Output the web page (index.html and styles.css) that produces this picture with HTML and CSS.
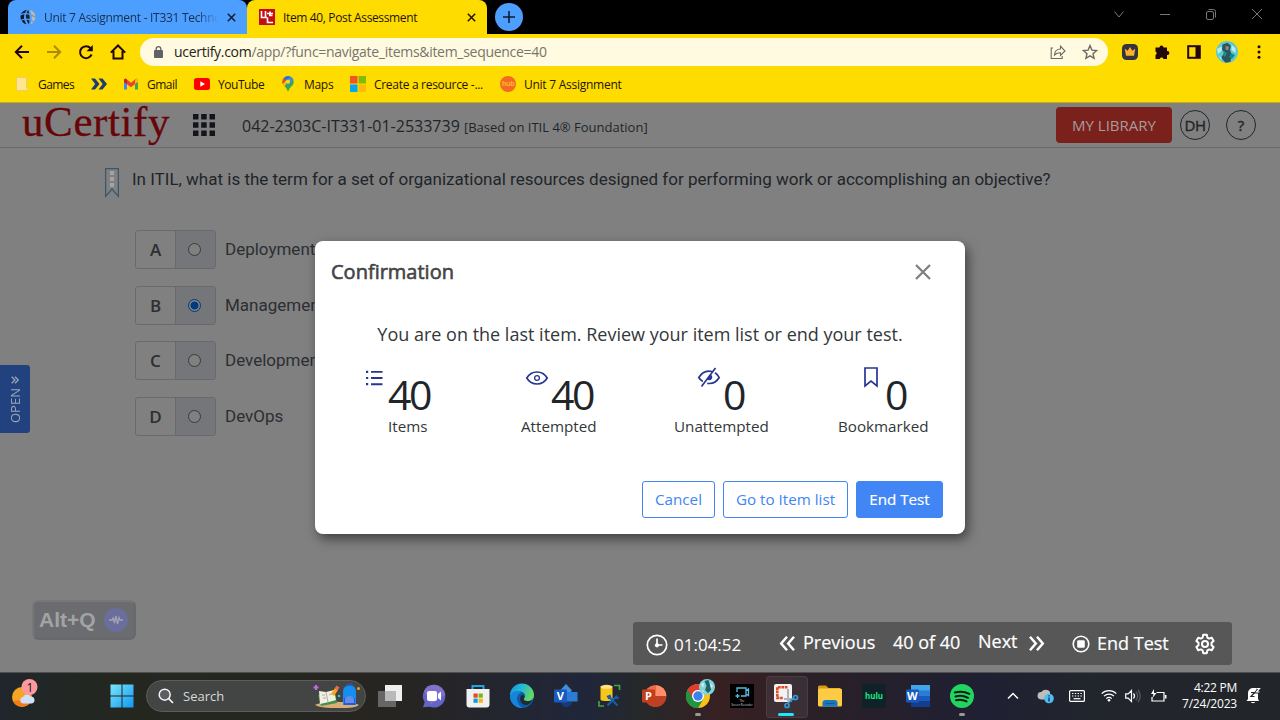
FILE: index.html
```html
<!DOCTYPE html>
<html lang="en">
<head>
<meta charset="utf-8">
<title>Item 40, Post Assessment</title>
<link rel="stylesheet" href="styles.css">
</head>
<body>
<div class="screen">
  <div class="tabstrip">
    <div class="tab tab-idle">
      <svg width="16" height="16" viewBox="0 0 16 16"><path d="M7 .8C2 1.500-.3 6 .8 10c1 3.200 3.200 4.700 5.700 5.200-3.400-5-3.400-9.500.5-14.400z" fill="#101820"/><path d="M8.300 1c-3.300 4-3.300 9.500.7 14.200 1-5 .8-9.700-.7-14.200z" fill="#17222e"/><path d="M9.700 1c4 1 6.100 4 5.600 8-.3 3-2 5.300-4.600 6.200 1.700-5 1.500-9.700-1-14.200z" fill="#c9b89a"/><path d="M.5 6c4.500-2.500 10-1 15 2.500M1 11.500c3-2.500 9-1.500 13 1.500" stroke="#4c9eff" stroke-width="1.200" fill="none"/></svg>
      <span class="tab-title fade">Unit 7 Assignment - IT331 Techno</span>
      <svg class="x" width="9" height="9" viewBox="0 0 9 9"><path d="M.8.8l7.400 7.400M8.200.8L.8 8.200" stroke="#101c2c" stroke-width="1.500"/></svg>
    </div>
    <div class="tab tab-active">
      <svg width="16" height="16" viewBox="0 0 16 16"><rect width="16" height="16" fill="#c40d12"/><path d="M2.500 2v6.500H8M6.500 2v6.500M4.500 11.500M13.500 6.500H10M14 13.500H8.500V8.500M11 2.500v4M8 4.500h6" stroke="#fff" stroke-width="1.600" fill="none"/></svg>
      <span class="tab-title">Item 40, Post Assessment</span>
      <svg class="x" width="9" height="9" viewBox="0 0 9 9"><path d="M.8.8l7.400 7.400M8.200.8L.8 8.200" stroke="#201400" stroke-width="1.500"/></svg>
    </div>
    <div class="newtab"><svg width="12" height="12" viewBox="0 0 12 12"><path d="M6 0v12M0 6h12" stroke="#0f1d30" stroke-width="1.600"/></svg></div>
    <div class="winctl">
      <svg width="12" height="12" viewBox="0 0 12 12"><path d="M1.500 3.500L6 9l4.500-5.500"/></svg>
      <svg width="12" height="12" viewBox="0 0 12 12"><path d="M1 6.500h10"/></svg>
      <svg width="12" height="12" viewBox="0 0 12 12"><rect x="1.500" y="3.500" width="7" height="8" rx="1.500"/><path d="M3.500 1.500h5a2 2 0 0 1 2 2v6"/></svg>
      <svg width="12" height="12" viewBox="0 0 12 12"><path d="M1 1l10 10M11 1L1 11"/></svg>
    </div>
  </div>

  <div class="toolbar">
    <svg class="nav" viewBox="0 0 16 16"><path d="M15 8H2M8 1.800L1.800 8 8 14.200"/></svg>
    <svg class="nav dim" viewBox="0 0 16 16"><path d="M1 8h13M8 1.800L14.200 8 8 14.200"/></svg>
    <svg class="nav" viewBox="0 0 16 16"><path d="M13.600 10.500A6 6 0 1 1 12.600 4.200"/><path d="M14.800 1v6.300H8.500z" fill="#22060c" stroke="none"/></svg>
    <svg class="nav" viewBox="0 0 16 16"><path d="M.8 8.600L8 1.500l7.200 7.100M3.500 7v7.500h9V7"/></svg>
    <div class="omnibox">
      <svg class="lock" width="9" height="12" viewBox="0 0 9 12"><rect y="4" width="9" height="8" rx="1" fill="#5f6268"/><path d="M2.200 4.500V3a2.300 2.300 0 0 1 4.600 0v1.500" stroke="#5f6268" stroke-width="1.300" fill="none"/></svg>
      <span class="url"><b>ucertify.com</b>/app/?func=navigate_items&amp;item_sequence=40</span>
      <svg class="omni-icon" width="16" height="16" viewBox="0 0 16 16"><path d="M3 4H1.200v10.500h11V12M4.500 11c.3-4 2.500-6 6-6V2.200L15 7l-4.500 4.500V8.700C8 8.700 6 9.500 4.500 11z"/></svg>
      <svg class="omni-icon" width="16" height="16" viewBox="0 0 16 16"><path stroke-width="1.400" d="M8 1.600l1.900 4.500 4.700.4-3.600 3.200 1.100 4.700L8 11.900l-4.100 2.500L5 9.700 1.400 6.500l4.700-.4z"/></svg>
    </div>
    <div class="ext">
      <svg width="16" height="16" viewBox="0 0 16 16"><rect width="16" height="16" rx="4.500" fill="#343440"/><path d="M2.800 4.800l2.900 2L8 3l2.300 3.800 2.900-2-1.200 7H4z" fill="#fdb02c"/></svg>
      <svg width="16" height="16" viewBox="0 0 16 16"><path d="M5.500 3.500a2 2 0 1 1 4 0H13v3.600h.5a1.900 1.900 0 0 1 0 3.800H13v4H9.500a1.900 1.900 0 0 0-3.700 0H1.500v-4a1.900 1.900 0 0 0 0-3.500V3.500z" fill="#22060c"/></svg>
      <svg width="14" height="14" viewBox="0 0 14 14"><rect x="1.200" y="1.200" width="11.600" height="11.600" fill="none" stroke="#22060c" stroke-width="2"/><rect x="8.500" y="1" width="4.500" height="12" fill="#22060c"/></svg>
      <svg width="22" height="22" viewBox="0 0 22 22"><circle cx="11" cy="11" r="11" fill="#5fc9d2"/><path d="M6.500 3.500l5-1.700 3.500 3-1 4 1.500 5-1 7-5 1-4.500-5 3.500-5-2.500-3z" fill="#2c555c"/><path d="M1 8l4.500-2.500.5 4L2 13zM15.500 4l4 3v5l-4-3zM3 15l3 2-1 2z" fill="#b5f0f3"/><path d="M9.500 5l3.500.7-.8 3.500-2.500-.5z" fill="#a18480"/><path d="M15 12l4 2-3 4-3-2z" fill="#138a8c"/><path d="M8 10l3 2-2 4-2-2z" fill="#178f91"/></svg>
      <svg width="4" height="16" viewBox="0 0 4 16" fill="#22060c"><circle cx="2" cy="2.800" r="1.500"/><circle cx="2" cy="8" r="1.500"/><circle cx="2" cy="13.200" r="1.500"/></svg>
    </div>
  </div>

  <div class="bookmarks">
    <svg width="16" height="16" viewBox="0 0 16 16"><path d="M2.500 1.500h10v10.500h1.500v2.500H2.500z" fill="#ffe68e" stroke="#edcd5e"/></svg>
    <span class="games">Games</span>
    <svg width="16" height="16" viewBox="0 0 16 16"><path d="M0 2.500h4L8.500 8 4 13.500H0L4.200 8zM7.500 2.500h4L16 8l-4.500 5.500h-4L11.700 8z" fill="#1d3d70"/></svg>
    <span></span>
    <svg width="16" height="16" viewBox="0 0 16 16"><path d="M1 4v9.500h3V7z" fill="#4285f4"/><path d="M15 4v9.500h-3V7z" fill="#34a853"/><path d="M1 3.500L2.800 2.500 8 6.700l5.200-4.200L15 3.500V6l-7 5.300L1 6z" fill="#ea4335"/><path d="M12 4v4l3-2V3.500l-1.500-1z" fill="#fbbc04"/><path d="M1 3.500V6l3 2V4.500L2.800 2.500z" fill="#c5221f"/></svg>
    <span class="gmail">Gmail</span>
    <svg width="16" height="16" viewBox="0 0 16 16"><rect y="2" width="16" height="12" rx="2.500" fill="#f00"/><path d="M6.300 5.300v5.400L11 8z" fill="#fff"/></svg>
    <span class="youtube">YouTube</span>
    <svg width="16" height="16" viewBox="0 0 16 16"><path d="M8 0a5.700 5.700 0 0 1 5.700 5.700c0 4.200-4.200 5-5.700 10.300C7 11 2.300 9.500 2.300 5.700z" fill="#34a853"/><path d="M8 0a5.700 5.700 0 0 1 5.300 3.600L8 9.500 5.800 7.200l4.600-6.600z" fill="#4285f4"/><path d="M3.700 2A5.700 5.700 0 0 1 8 0l2 .4-4 5z" fill="#1a73e8"/><path d="M3.700 2l2.700 2.300-3.600 3.800C2 6 2.300 3.500 3.700 2z" fill="#ea4335"/><path d="M2.800 8.100l3.100-3.600.5 3.200-2.100 3z" fill="#fbbc04"/><circle cx="8" cy="5.700" r="2.100" fill="#ffdc00"/></svg>
    <span class="maps">Maps</span>
    <svg width="16" height="16" viewBox="0 0 16 16"><path d="M0 0h7.500v7.500H0z" fill="#f35325"/><path d="M8.500 0H16v7.500H8.500z" fill="#81bc06"/><path d="M0 8.500h7.500V16H0z" fill="#05a6f0"/><path d="M8.500 8.500H16V16H8.500z" fill="#ffba08"/></svg>
    <span class="create">Create a resource -...</span>
    <div class="hub">hub</div>
    <span class="unit">Unit 7 Assignment</span>
  </div>

  <main class="app">
    <header class="site">
      <div class="logo">uCertify</div>
      <svg class="apps" width="22" height="22" viewBox="0 0 22 22" fill="#13151b"><path d="M0 0h5.500v5.500H0zM8.200 0h5.500v5.500H8.200zM16.500 0H22v5.500h-5.500zM0 8.200h5.500v5.500H0zM8.200 8.200h5.500v5.500H8.200zM16.500 8.200H22v5.500h-5.500zM0 16.500h5.500V22H0zM8.200 16.500h5.500V22H8.200zM16.500 16.500H22V22h-5.500z"/></svg>
      <div class="course">042-2303C-IT331-01-2533739 <small>[Based on ITIL 4® Foundation]</small></div>
      <div class="library">MY LIBRARY</div>
      <div class="round dh">DH</div>
      <div class="round help">?</div>
    </header>
    <div class="question">
      <svg width="14" height="30" viewBox="0 0 14 30"><path d="M.6 28.300V.6h12.800v27.700L7 21z" fill="none" stroke="#35566c" stroke-width="1.200"/><path d="M5 3h4v4H5zM5 9h4v4H5zM5 15h4v4H5z" fill="#a3a3a3"/></svg>
      <p>In ITIL, what is the term for a set of organizational resources designed for performing work or accomplishing an objective?</p>
    </div>
    <div class="options">
      <div class="option"><div class="key"><b>A</b><i><span class="radio"></span></i></div><span>Deployment</span></div>
      <div class="option"><div class="key"><b>B</b><i><span class="radio on"></span></i></div><span>Management</span></div>
      <div class="option"><div class="key"><b>C</b><i><span class="radio"></span></i></div><span>Development</span></div>
      <div class="option"><div class="key"><b>D</b><i><span class="radio"></span></i></div><span>DevOps</span></div>
    </div>
    <div class="open-tab"><span>OPEN</span><svg width="8" height="8" viewBox="0 0 8 8"><path d="M.7.7L4 4 .7 7.300M4 .7L7.300 4 4 7.300" fill="none" stroke="#9aa5b8" stroke-width="1.300"/></svg></div>
    <div class="hotkey"><span>Alt+Q</span><svg width="24" height="24" viewBox="0 0 24 24"><circle cx="12" cy="12" r="12" fill="#6b6d9d"/><path d="M5 12h3l1.200-2 1.300 5 1.500-7 1.500 8 1.500-6.500 1 2.500h3" fill="none" stroke="#a4a5b4" stroke-width="1.300"/></svg></div>
    <div class="testbar">
      <svg class="clock" width="22" height="22" viewBox="0 0 22 22"><circle cx="11" cy="11" r="9.700" fill="none" stroke="#fff" stroke-width="1.700"/><path d="M11 4.500V11h5.500" fill="none" stroke="#fff" stroke-width="1.700"/><circle cx="11" cy="11.300" r="2.100" fill="#fff"/></svg>
      <span class="time">01:04:52</span>
      <svg class="chev" width="15" height="15" viewBox="0 0 15 15"><path d="M7 .8L1.200 7.500 7 14.200M14 .8L8.200 7.500l5.800 6.700"/></svg>
      <span class="prev">Previous</span>
      <span class="count">40 of 40</span>
      <span class="next">Next</span>
      <svg class="chev" width="15" height="15" viewBox="0 0 15 15"><path d="M1 .8l5.800 6.700L1 14.200M8 .8l5.800 6.700L8 14.200"/></svg>
      <svg class="stop" width="18" height="18" viewBox="0 0 18 18"><circle cx="9" cy="9" r="7.800" fill="none" stroke="#fff" stroke-width="1.600"/><rect x="5.200" y="5.200" width="7.600" height="7.600" rx="1.200" fill="#fff"/></svg>
      <span class="end">End Test</span>
      <svg class="gear" width="22" height="22" viewBox="0 0 24 24"><path d="M10 2h4l.6 3 1.900 1.100 2.900-1 2 3.500-2.300 2v2.800l2.300 2-2 3.500-2.900-1-1.900 1.100-.6 3h-4l-.6-3-1.900-1.100-2.900 1-2-3.500 2.300-2v-2.800l-2.300-2 2-3.500 2.900 1L9.400 5z" fill="none" stroke="#fff" stroke-width="2.200" stroke-linejoin="round"/><circle cx="12" cy="12" r="3.300" fill="none" stroke="#fff" stroke-width="2.200"/></svg>
    </div>

    <section class="modal">
      <div class="modal-head"><h2>Confirmation</h2><svg width="16" height="16" viewBox="0 0 16 16"><path d="M1 1l14 14M15 1L1 15" stroke="#808080" stroke-width="2.300"/></svg></div>
      <p class="message">You are on the last item. Review your item list or end your test.</p>
      <div class="stats">
        <div class="stat items"><div class="figure"><svg width="18" height="16" viewBox="0 0 18 16" fill="#283593"><path d="M1 .7h2.200v2.200H1zM1 6.900h2.200v2.200H1zM1 13.100h2.200v2.200H1zM6 .9h11.500v1.900H6zM6 7.100h11.500V9H6zM6 13.300h11.500v1.900H6z"/></svg><strong>40</strong></div><span>Items</span></div>
        <div class="stat attempted"><div class="figure"><svg width="22" height="14" viewBox="0 0 22 14"><path d="M.8 7C5.500-1 16.500-1 21.200 7 16.500 15 5.500 15 .8 7z" fill="none" stroke="#283593" stroke-width="1.700"/><circle cx="11" cy="7" r="2.400" fill="none" stroke="#283593" stroke-width="1.300"/></svg><strong>40</strong></div><span>Attempted</span></div>
        <div class="stat unattempted"><div class="figure"><svg width="22" height="20" viewBox="0 0 22 20"><path d="M4.800 14.500C3 13.500 1.700 12.100.8 10.500 4.500 4.300 10 3.500 14 4.500M17 5.700c1.700 1.100 3.200 2.700 4.200 4.800-2.800 4.800-7.500 6.500-12 5.800" fill="none" stroke="#283593" stroke-width="1.700"/><path d="M3.500 19.500L17.500 1" stroke="#283593" stroke-width="1.700"/><path d="M12.500 7.500a3 3 0 1 1-3.500 4.700z" fill="#283593"/></svg><strong>0</strong></div><span>Unattempted</span></div>
        <div class="stat bookmarked"><div class="figure"><svg width="14" height="20" viewBox="0 0 14 20"><path d="M1 19V1h12v18l-6-4.800z" fill="none" stroke="#283593" stroke-width="1.700"/></svg><strong>0</strong></div><span>Bookmarked</span></div>
      </div>
      <div class="actions"><button class="btn cancel">Cancel</button><button class="btn list">Go to Item list</button><button class="btn primary">End Test</button></div>
    </section>
  </main>

  <footer class="taskbar">
    <svg class="weather" width="26" height="30" viewBox="0 0 26 30"><circle cx="10" cy="18" r="10" fill="#f5a423"/><path d="M1 22a10 10 0 0 0 16 3l3-5z" fill="#f27a1b"/><path d="M11 24.500a3.300 3.300 0 0 1 0-6.500 4.300 4.300 0 0 1 7.500-.5 3.600 3.600 0 0 1 1.500 7z" fill="#cfe0fa"/><circle cx="17.500" cy="8" r="8" fill="#ff99a0"/><text x="14.500" y="12.500" font-size="12" font-family="Open Sans, sans-serif" fill="#111">1</text></svg>
    <svg class="start" width="24" height="24" viewBox="0 0 24 24"><defs><linearGradient id="win" gradientUnits="userSpaceOnUse" x1="0" y1="0" x2="24" y2="24"><stop stop-color="#7ce8fb"/><stop offset="1" stop-color="#0f95f2"/></linearGradient></defs><path d="M.5.5h11v11H.5zM12.500.5h11v11h-11zM.5 12.500h11v11H.5zM12.500 12.500h11v11h-11z" fill="url(#win)"/></svg>
    <div class="search">
      <svg width="16" height="16" viewBox="0 0 16 16"><circle cx="6.700" cy="6.700" r="5.500" fill="#5b5e62" stroke="#f4f4f4" stroke-width="1.500"/><path d="M10.700 10.700l4.300 4.300" stroke="#f4f4f4" stroke-width="1.700"/></svg>
      <span>Search</span>
      <svg class="art" width="48" height="26" viewBox="0 0 48 26"><path d="M2 22c5-3 16-4 25-3 9 0 15 1 19 3-3 2.500-8 3-20 3S6 24.500 2 22z" fill="#dcae74"/><path d="M5 12l17-3 2 11-16 3z" fill="#42914d"/><path d="M6 8l7 1 8-2 2 10-7 2-9 2z" fill="#f3efe2"/><path d="M13 9l2 10M9 12l3 0M10 15l3 0M16 12l4-2" stroke="#9a9a98" stroke-width=".8"/><path d="M18 11l4-6 3 2-4 6z" fill="#f8a71d"/><path d="M21.500 5.500l2-3 3 2-2 3z" fill="#ee6655"/><path d="M30 22V9c0-4.500 2.500-6.500 6.500-6.500S43 4.500 43 9v13z" fill="#168ef0"/><path d="M31 15h11v7H31z" fill="#2459dc"/><path d="M32 16c2-4 7-4 9 0v4h-9z" fill="#698bea"/><path d="M34 3V1h5v2" stroke="#2459dc" fill="none"/><path d="M3 2v5M.5 4.500h5" stroke="#c765e4" stroke-width="2"/><circle cx="26" cy="13" r="1.300" fill="#36bcc5"/><circle cx="45.500" cy="5.500" r="1.500" fill="#f2a11b"/></svg>
    </div>
    <div class="apps-row">
      <div class="cell"><svg viewBox="0 0 24 24"><path d="M7 1h17v16H7z" fill="#efefef"/><path d="M0 7h18v16H0z" fill="#727272" opacity=".85"/><path d="M7 7h11v10H7z" fill="#b9b9b9"/></svg></div>
      <div class="cell"><svg viewBox="0 0 24 24"><path d="M12 .8a11.400 11.400 0 1 1-4.300 22L1 23.300l1.700-5A11.400 11.400 0 0 1 12 .8z" fill="#6264c7"/><path d="M12 .8a11.400 11.400 0 0 1 11.300 10L9 20 2 7A11.400 11.400 0 0 1 12 .8z" fill="#8370cc"/><rect x="5" y="7" width="10" height="10" rx="2" fill="#fff"/><path d="M16 10l3-2.500v9L16 14z" fill="#fff"/></svg></div>
      <div class="cell"><svg viewBox="0 0 24 24"><path d="M6.500 6V2h11v4" fill="none" stroke="#20a2e8" stroke-width="2"/><path d="M.5 5h23v15.500a3 3 0 0 1-3 3h-17a3 3 0 0 1-3-3z" fill="#f0f0ee"/><path d="M7.500 9.500h4.200v4.200H7.500z" fill="#e84a20"/><path d="M12.600 9.500h4.200v4.200h-4.200z" fill="#73b81c"/><path d="M7.500 14.600h4.200v4.200H7.500z" fill="#009fe5"/><path d="M12.600 14.600h4.200v4.200h-4.200z" fill="#f6b418"/></svg></div>
      <div class="cell"><svg viewBox="0 0 24 24"><defs><linearGradient id="edge" x1="0" y1="0" x2="1" y2=".4"><stop stop-color="#168fdc"/><stop offset=".5" stop-color="#22bad4"/><stop offset="1" stop-color="#62d764"/></linearGradient></defs><circle cx="12" cy="12" r="12" fill="#0c5cab"/><path d="M0 12A12 12 0 0 1 24 11c0 4-3 6-6.500 6-3 0-4-1.200-3.600-2.500 1-1 1.500-2 1.100-3.700C14 6.500 5 5 0 12z" fill="url(#edge)"/><path d="M0 12c2-5 8-6.500 12-3.700-4.500 1-6 5.700-4.300 9.700 1 3 3 5 5 5.900C5 24.500 0 18.500 0 12z" fill="#1784d8"/><path d="M12 11c2 0 3.200 1.700 1.900 3.500-.6 1.500 1 2.800 4 2.700 2 0 3.500-.6 4.600-1.200C20 20.500 16.500 22 13.500 20.500 9.500 18.500 9 12.500 12 11z" fill="#26292e"/></svg></div>
      <div class="cell"><svg viewBox="0 0 24 24"><path d="M12 0l6 6.500-6 6.500-6-6.500z" fill="#3f91db"/><path d="M12 8h11.500v9.500H12z" fill="#2b7cd3"/><path d="M7 18h11c0 3-3 5-5.500 5S7 21 7 18z" fill="#143a7a"/><rect y="5.500" width="13" height="13" rx="1" fill="#185abd"/><text x="2.800" y="15.700" class="letter">V</text></svg></div>
      <div class="cell"><svg viewBox="0 0 24 24"><path d="M2.500 2.500v13c0 2 12 2 12 0v-13z" fill="#fac51b"/><ellipse cx="8.500" cy="2.800" rx="6" ry="2" fill="#ffe382"/><path d="M16 1.500h5.500V6M1 17v5h5" fill="none" stroke="#4b9e45" stroke-width="1.700"/><path d="M9.500 21.500l9-9M10.500 12.500l9 9" stroke="#1260ad" stroke-width="2"/><path d="M8.500 12l4-1.500 1 3-3 2zM17 14l1.500-3.500 1 2.500h2l-2 2.500z" fill="#1260ad"/></svg></div>
      <div class="cell"><svg viewBox="0 0 24 24"><circle cx="13.500" cy="12" r="10.800" fill="#d35230"/><path d="M13.500 1.200A10.800 10.800 0 0 1 24.300 12H13.500z" fill="#ff8f6b"/><path d="M2.700 12h21.600a10.800 10.800 0 0 1-21.600 0z" fill="#bd4225"/><path d="M13.500 1.200V12H2.700A10.800 10.800 0 0 1 13.500 1.200z" fill="#ed6c47"/><rect y="5.500" width="13" height="13" rx="1" fill="#c43e1c"/><text x="3" y="15.700" class="letter">P</text></svg></div>
      <div class="cell run"><svg viewBox="0 0 24 24"><circle cx="12" cy="12" r="12" fill="#fbc116"/><path d="M1.600 6A12 12 0 0 0 12 24l5.200-9L12 12z" fill="#229342"/><path d="M1.600 6A12 12 0 0 1 22.400 6H12a6 6 0 0 0-5.500 8z" fill="#e33b2e"/><path d="M1.600 6A12 12 0 0 0 12 24l5.200-9L7 15z" fill="#229342"/><circle cx="12" cy="12" r="6" fill="#fff"/><circle cx="12" cy="12" r="4.700" fill="#3b82ee"/></svg><svg class="mini" viewBox="0 0 16 16"><circle cx="8" cy="8" r="8" fill="#7fd6da"/><path d="M5.500 2l4-1 1.500 5 1 5-3 3-3-3 1.500-4z" fill="#255f67"/><path d="M2 5l3-1-1 5zM11 4l3 3-2 2zM3 11l2 1-1 1z" fill="#d4f4f2"/></svg></div>
      <div class="cell"><svg viewBox="0 0 24 24"><path d="M0 0h24v24H0z" fill="#000"/><path d="M7 8V4h9v8h-5M16 6.500l2.500-1.500v6.500L16 10M5.500 12h4M7.500 10v4" fill="none" stroke="#57bce0" stroke-width="1.300"/><text x="12" y="18" class="tiny">The</text><text x="12" y="22.300" class="tiny">Screen Recorder</text></svg></div>
      <div class="cell current"><svg viewBox="0 0 24 24"><rect width="18" height="18" rx="2" fill="#f1f1f1"/><path d="M13.500 3.200H3.300V14H9" fill="none" stroke="#d9401a" stroke-width="2.600" stroke-dasharray="2.700 .7"/><path d="M14 5v12M10 15h10" stroke="#a9acb0" stroke-width="2"/><circle cx="21.500" cy="13.500" r="2" fill="none" stroke="#2490d8" stroke-width="1.700"/><circle cx="13" cy="21.500" r="2" fill="none" stroke="#2490d8" stroke-width="1.700"/><path d="M14 19l5.500-4.500" stroke="#2490d8" stroke-width="1.700"/></svg></div>
      <div class="cell"><svg viewBox="0 0 24 24"><path d="M0 3a1.500 1.500 0 0 1 1.500-1.500H8L10.500 4H22v6H0z" fill="#d99a12"/><rect y="4.500" width="24" height="18" rx="1.500" fill="#fdcb44"/><path d="M4.500 22.500V19a3 3 0 0 1 3-3h9a3 3 0 0 1 3 3v3.500z" fill="#1877be"/><path d="M7.500 19.500h9" stroke="#0a5a96"/></svg></div>
      <div class="cell"><svg viewBox="0 0 24 24"><path d="M0 0h24v24H0z" fill="#0e2228"/><text x="12" y="15" class="hulu">hulu</text></svg></div>
      <div class="cell"><svg viewBox="0 0 24 24"><path d="M5 1h19v6H5z" fill="#41a5ee"/><path d="M5 6.500h19V12H5z" fill="#2b7cd3"/><path d="M5 12h19v5.500H5z" fill="#185abd"/><path d="M5 17.500h19V23H5z" fill="#103f91"/><rect y="5.500" width="13" height="13" rx="1" fill="#185abd"/><text x=".9" y="15.500" class="letter">W</text></svg></div>
      <div class="cell run"><svg viewBox="0 0 24 24"><circle cx="12" cy="12" r="12" fill="#1fd760"/><path d="M4.800 8.500c5-1.500 10-1 14.500 1.400M5.500 12.500c4-1.200 8.500-.8 12.500 1.300M6 16.200c3.500-1 7-.7 10.500 1.200" fill="none" stroke="#0e1a13" stroke-width="2" stroke-linecap="round"/></svg></div>
    </div>
    <div class="tray">
      <svg class="up" width="12" height="8" viewBox="0 0 12 8"><path d="M1 6.500l5-5 5 5"/></svg>
      <svg class="cloud" width="18" height="16" viewBox="0 0 18 16"><path d="M4 11.500a3.700 3.700 0 0 1 .5-7.400A5 5 0 0 1 13 4v7.500z" fill="#bdbdbd" stroke="none"/><circle cx="12" cy="10.500" r="4.800" fill="#4fbdf2" stroke="none"/><path d="M12 9.500v4M12 7.200v1.300" stroke="#10293b"/></svg>
      <svg class="kbd" width="16" height="12" viewBox="0 0 16 12"><rect x=".6" y=".6" width="14.800" height="10.800" rx="1"/><path d="M3 3.500h10M3 6h10" stroke-dasharray="1.400 1.400"/><path d="M4.500 8.700h7"/></svg>
      <svg class="wifi" width="16" height="13" viewBox="0 0 16 13"><path d="M.7 4.700a10.300 10.300 0 0 1 14.600 0M3 7.200a7 7 0 0 1 10 0M5.300 9.600a3.800 3.800 0 0 1 5.400 0"/><circle cx="8" cy="11.300" r="1.300" fill="#fff" stroke="none"/></svg>
      <svg class="vol" width="16" height="14" viewBox="0 0 16 14"><path d="M.7 4.800h2.500L6.500 1.500v11L3.200 9.200H.7zM8.500 4.500c1.300 1.500 1.300 3.500 0 5"/><path class="muted" d="M10.800 2.700c2.300 2.500 2.300 6 0 8.600M13 1c3 3.500 3 8.500 0 12"/></svg>
      <svg class="bat" width="17" height="14" viewBox="0 0 17 14"><path d="M6.500 3.500H14V12H2V8"/><path d="M15.700 6v3.500" stroke-width="1.600"/><path d="M4 0L1 5h2.500L2.500 9 6.500 4H4z" fill="#fff" stroke="none"/></svg>
      <div class="datetime"><span class="t">4:22 PM</span><span class="d">7/24/2023</span></div>
      <svg class="bell" width="15" height="17" viewBox="0 0 15 17"><path d="M2 12V6a5 5 0 0 1 5-5h5v11l1 2H.5zM5 15h4c-.5 1.600-3.500 1.600-4 0z" fill="#fff" stroke="none"/><path d="M5 5.500h3.500L5 9.500h3.500" stroke="#22252b"/><path d="M10.500 1.500h3l-3 3.500h3" stroke="#22252b" stroke-width="3"/><path d="M10.500 1.500h3l-3 3.500h3"/></svg>
    </div>
  </footer>
</div>
</body>
</html>
```
FILE: styles.css
```css
* { box-sizing: border-box; }
body { margin: 0; font-family: "Open Sans", "Noto Sans", sans-serif; color: #212529; background: #808080; }
svg { display: block; flex: none; overflow: visible; }
span, small { white-space: nowrap; }
.screen { width: 1280px; height: 720px; display: flex; flex-direction: column; overflow: hidden; }

/* Browser tabs */
.tabstrip { height: 34px; flex: none; background: #000; display: flex; padding-left: 8px; }
.tab { height: 34px; display: flex; align-items: center; font-size: 12px; border-radius: 8px 8px 0 0; }
.tab-idle { width: 239px; background: #4c9eff; padding-left: 12px; color: #17304d; }
.tab-active { width: 240px; background: #ffdc00; padding-left: 12px; color: #1c1505; }
.tab-title { width: 174px; margin-left: 8px; overflow: hidden; letter-spacing: -.36px; }
.tab-idle .tab-title { letter-spacing: -.3px; }
.fade { -webkit-mask-image: linear-gradient(90deg, #000 88%, transparent); }
.tab .x { margin-left: 9px; }
.tab-active .x { margin-left: 10px; }
.newtab { width: 28px; height: 28px; margin: 3px 0 0 8px; border-radius: 50%; background: #4c9eff; display: flex; align-items: center; justify-content: center; }
.winctl { display: flex; gap: 34px; margin-left: auto; padding: 8px 17px 0 0; }
.winctl svg { fill: none; stroke: #777; stroke-width: 1; }

/* Address row */
.toolbar { height: 35px; flex: none; background: #ffdc00; display: flex; align-items: center; padding: 1px 0 0 14px; }
.nav { width: 16px; height: 16px; margin-right: 16px; fill: none; stroke: #22060c; stroke-width: 2; }
.nav.dim { stroke: #a98b08; }
.omnibox { width: 968px; height: 28px; margin-left: -2px; border-radius: 14px; background: #fffae0; display: flex; align-items: center; padding: 0 10px 0 14px; }
.url { margin: -1px auto 0 11px; font-size: 14px; letter-spacing: -.29px; color: #77756c; }
.url b { font-weight: 400; color: #242321; }
.omni-icon { margin-left: 16px; fill: none; stroke: #6c6a63; stroke-width: 1.1; }
.ext { display: flex; align-items: center; margin-left: 14px; }
.ext svg:nth-child(2) { margin-left: 16px; }
.ext svg:nth-child(3) { margin-left: 17px; }
.ext svg:nth-child(4) { margin-left: 15px; }
.ext svg:nth-child(5) { margin-left: 19px; }

.bookmarks { height: 34px; flex: none; background: #ffdc00; border-bottom: 1px solid #c9ad0c; padding: 0 0 3px 14px; display: grid; align-items: center; font-size: 12px; color: #1c1505;
  grid-template-columns: 24px 53px 16px 16px 24px 47px 24px 62px 24px 46px 24px 126px 24px 120px; }
.games { letter-spacing: -.55px; }
.gmail { letter-spacing: -.48px; }
.youtube { letter-spacing: -.45px; }
.maps { letter-spacing: -.3px; }
.create { letter-spacing: -.3px; }
.unit { letter-spacing: -.26px; }
.hub { width: 16px; height: 16px; border-radius: 50%; background: #f26b21; color: #ffb52e; font-size: 7px; line-height: 15px; text-align: center; font-weight: 700; letter-spacing: -.3px; }

/* Assessment page */
.app { position: relative; flex: 1; background: #808080; }
.site { height: 45px; display: flex; align-items: center; border-bottom: 1px solid #6b6b6b; padding-left: 22px; }
.logo { width: 171px; font: 43px/46px "Liberation Serif", serif; letter-spacing: .6px; color: #680509; margin-top: -7px; -webkit-text-stroke: .3px #680509; }
.apps { margin-top: -1px; }
.course { margin: 1px auto 0 27px; font-size: 16px; white-space: nowrap; }
.course small { font-size: 13px; }
.library { width: 116px; height: 36px; border-radius: 4px; background: #7a211b; color: #a69c9b; font-size: 15px; line-height: 36px; text-align: center; }
.round { width: 30px; height: 30px; border: 1px solid #212529; border-radius: 50%; font-size: 15px; line-height: 28px; text-align: center; -webkit-text-stroke: .4px #212529; }
.dh { margin-left: 8px; letter-spacing: -.4px; }
.help { margin: 0 24px 0 16px; }
.question { display: flex; padding: 20px 0 0 105px; font: 17px/24px Roboto, sans-serif; }
.question p { margin: -1px 0 0 13px; white-space: nowrap; }
.options { padding: 32px 0 0 135px; font: 17px/24px Roboto, sans-serif; color: #2b2f33; }
.option { height: 39.500px; margin-bottom: 16px; display: flex; align-items: center; gap: 9px; }
.key { width: 81px; height: 39px; display: flex; border: 1px solid #686a6d; border-radius: 3px; overflow: hidden; font: 600 17px/37px "Open Sans", sans-serif; }
.key b { flex: 1; text-align: center; font-weight: 600; }
.key i { width: 40px; background: #747679; border-left: 1px solid #686a6d; display: flex; align-items: center; justify-content: center; padding-right: 2px; }
.radio { width: 13px; height: 13px; border: 1px solid #3a3a3a; border-radius: 50%; background: #808080; }
.radio.on { border: 1px solid #003b80; background: radial-gradient(circle, #003b80 0 3.700px, #808080 4.300px); }
.option > span { margin-top: -1px; }
.open-tab { position: absolute; left: 0; top: 262px; width: 30px; height: 68px; border-radius: 3px 0 0 3px; background: #21427e; color: #9aa5b8; font-size: 13px; line-height: 30px; writing-mode: vertical-rl; transform: rotate(180deg); display: flex; align-items: center; padding-top: 10px; gap: 4px; }
.open-tab svg { transform: rotate(180deg); }
.hotkey { position: absolute; left: 32px; top: 497px; width: 104px; height: 40px; border-radius: 6px; border: 2px solid; border-color: #777 #68696b #68696b #777; background: #6b6c70; display: flex; align-items: center; padding: 0 0 1px 5px; gap: 8px; color: #a3a3a3; font: bold 21px/24px "Liberation Sans", sans-serif; }
.testbar { position: absolute; left: 633px; top: 519px; width: 599px; height: 43px; border-radius: 3px; background: #575757; color: #fff; display: flex; align-items: center; padding-left: 13px; font-size: 18px; -webkit-text-stroke: .2px #fff; }
.testbar .clock { margin-top: 2px; }
.time { width: 68px; margin-left: 6px; font-size: 17px; margin-top: 1px; -webkit-text-stroke: 0; }
.chev { fill: none; stroke: #fff; stroke-width: 2.5; margin-left: 38px; margin-top: -1px; }
.prev { width: 72px; margin: -3px 0 0 8px; }
.count { width: 68px; margin: -3px 0 0 18px; }
.next { width: 39px; margin: -5px 0 0 17px; }
.next + .chev { margin-left: 12px; }
.stop { margin: 1px 0 0 28px; }
.end { width: 72px; margin: -1px 0 0 7px; }
.gear { margin-left: 25px; }

/* Dialog */
.modal { position: absolute; left: 315px; top: 138px; width: 650px; height: 293px; border-radius: 8px; background: #fff; box-shadow: 3px 5px 12px rgba(0,0,0,.5); }
.modal-head { display: flex; justify-content: space-between; align-items: center; padding: 17px 34px 0 16px; }
.modal-head h2 { margin: 0; font-size: 20px; line-height: 28px; font-weight: 400; color: #444; -webkit-text-stroke: .6px #444; }
.modal-head svg { margin-top: -1px; }
.message { margin: 35px 0 0; text-align: center; font-size: 18px; line-height: 27px; white-space: nowrap; color: #33373a; }
.stats { display: flex; padding: 22px 0 0 50px; }
.stat { font-size: 15.200px; line-height: 22px; }
.stat > span { display: block; color: #33373a; }
.figure { display: flex; height: 45px; }
.figure strong { font-weight: 400; font-size: 41px; line-height: 44px; height: 44px; letter-spacing: -2.500px; margin-top: 2px; }
.items { width: 156px; }
.items > span { padding-left: 23px; }
.items strong { margin-left: 5px; }
.attempted { width: 153px; }
.attempted .figure { padding-left: 5px; }
.attempted strong { margin-left: 3px; }
.unattempted { width: 164px; }
.unattempted .figure { padding-left: 24px; }
.unattempted strong { margin-left: 3px; }
.bookmarked .figure { padding-left: 26px; }
.bookmarked strong { margin-left: 7px; }
.items svg { margin-top: 0; }
.attempted svg { margin-top: 1px; }
.unattempted svg { margin-top: -3px; }
.bookmarked svg { margin-top: -3px; }
.actions { display: flex; justify-content: flex-end; gap: 8px; padding: 44px 22px 0 0; }
.btn { height: 37px; padding: 0; border: 1px solid #4285f4; border-radius: 3px; background: #fff; color: #4285f4; font: 15.200px/33px "Open Sans", sans-serif; }
.cancel { width: 73px; }
.list { width: 125px; }
.primary { width: 87px; background: #4285f4; color: #fff; -webkit-text-stroke: .2px #fff; }

/* Windows taskbar */
.taskbar { height: 48px; flex: none; position: relative; display: flex; align-items: center; border-top: 1px solid #505050; background: linear-gradient(90deg, #20262b 0, #24271f 120px, #272522 400px, #20263a 585px, #25282a 640px, #372022 720px, #2a2028 820px, #1f2033 980px, #22262c 1100px, #22252a); color: #fff; padding-left: 12px; }
.weather { margin-top: -6px; }
.start { margin-left: 72px; margin-top: -1px; }
.search { width: 220px; height: 32px; margin: -1px 0 0 12px; border: 1px solid #5c5c5a; border-radius: 16px; background: #424543; display: flex; align-items: center; padding-left: 11px; font-size: 13px; color: #d8d8d8; }
.search span { margin-left: 9px; }
.search .art { margin: 0 4px 0 auto; }
.apps-row { display: flex; margin: -1px 0 0 2px; }
.cell { position: relative; width: 44px; height: 48px; display: flex; align-items: center; justify-content: center; }
.cell > svg { width: 24px; height: 24px; }
.run::after { content: ""; position: absolute; bottom: 4px; left: 19px; width: 6px; height: 3px; border-radius: 2px; background: #999; }
.current::before { content: ""; position: absolute; left: 2px; top: 4px; width: 40px; height: 40px; border-radius: 4px; background: rgba(255,255,255,.07); border: 1px solid rgba(255,255,255,.07); }
.current::after { content: ""; position: absolute; bottom: 4px; left: 14px; width: 16px; height: 3px; border-radius: 2px; background: #1ee7fa; }
.cell .mini { position: absolute; left: 23px; top: 7px; width: 16px; height: 16px; }
.letter { font: bold 11px "Open Sans", sans-serif; fill: #fff; }
.tiny { font: 2.800px "Open Sans", sans-serif; fill: #ddd; text-anchor: middle; }
.hulu { font: bold 8px "Open Sans", sans-serif; fill: #1ce783; text-anchor: middle; }
.tray { display: flex; align-items: center; margin: -2px 0 0 23px; }
.tray svg { fill: none; stroke: #fff; stroke-width: 1.2; }
.tray .up { stroke-width: 1.5; }
.tray .muted { stroke: #5b5e62; }
.cloud { margin-left: 18px; }
.kbd { margin-left: 14px; }
.wifi { margin-left: 16px; }
.vol { margin-left: 8px; }
.bat { margin-left: 9px; }
.datetime { width: 70px; display: flex; flex-direction: column; align-items: flex-end; font-size: 12px; line-height: 16px; margin-top: 1px; }
.t { letter-spacing: -.25px; }
.d { letter-spacing: -.2px; }
.bell { margin-left: 9px; }
```
